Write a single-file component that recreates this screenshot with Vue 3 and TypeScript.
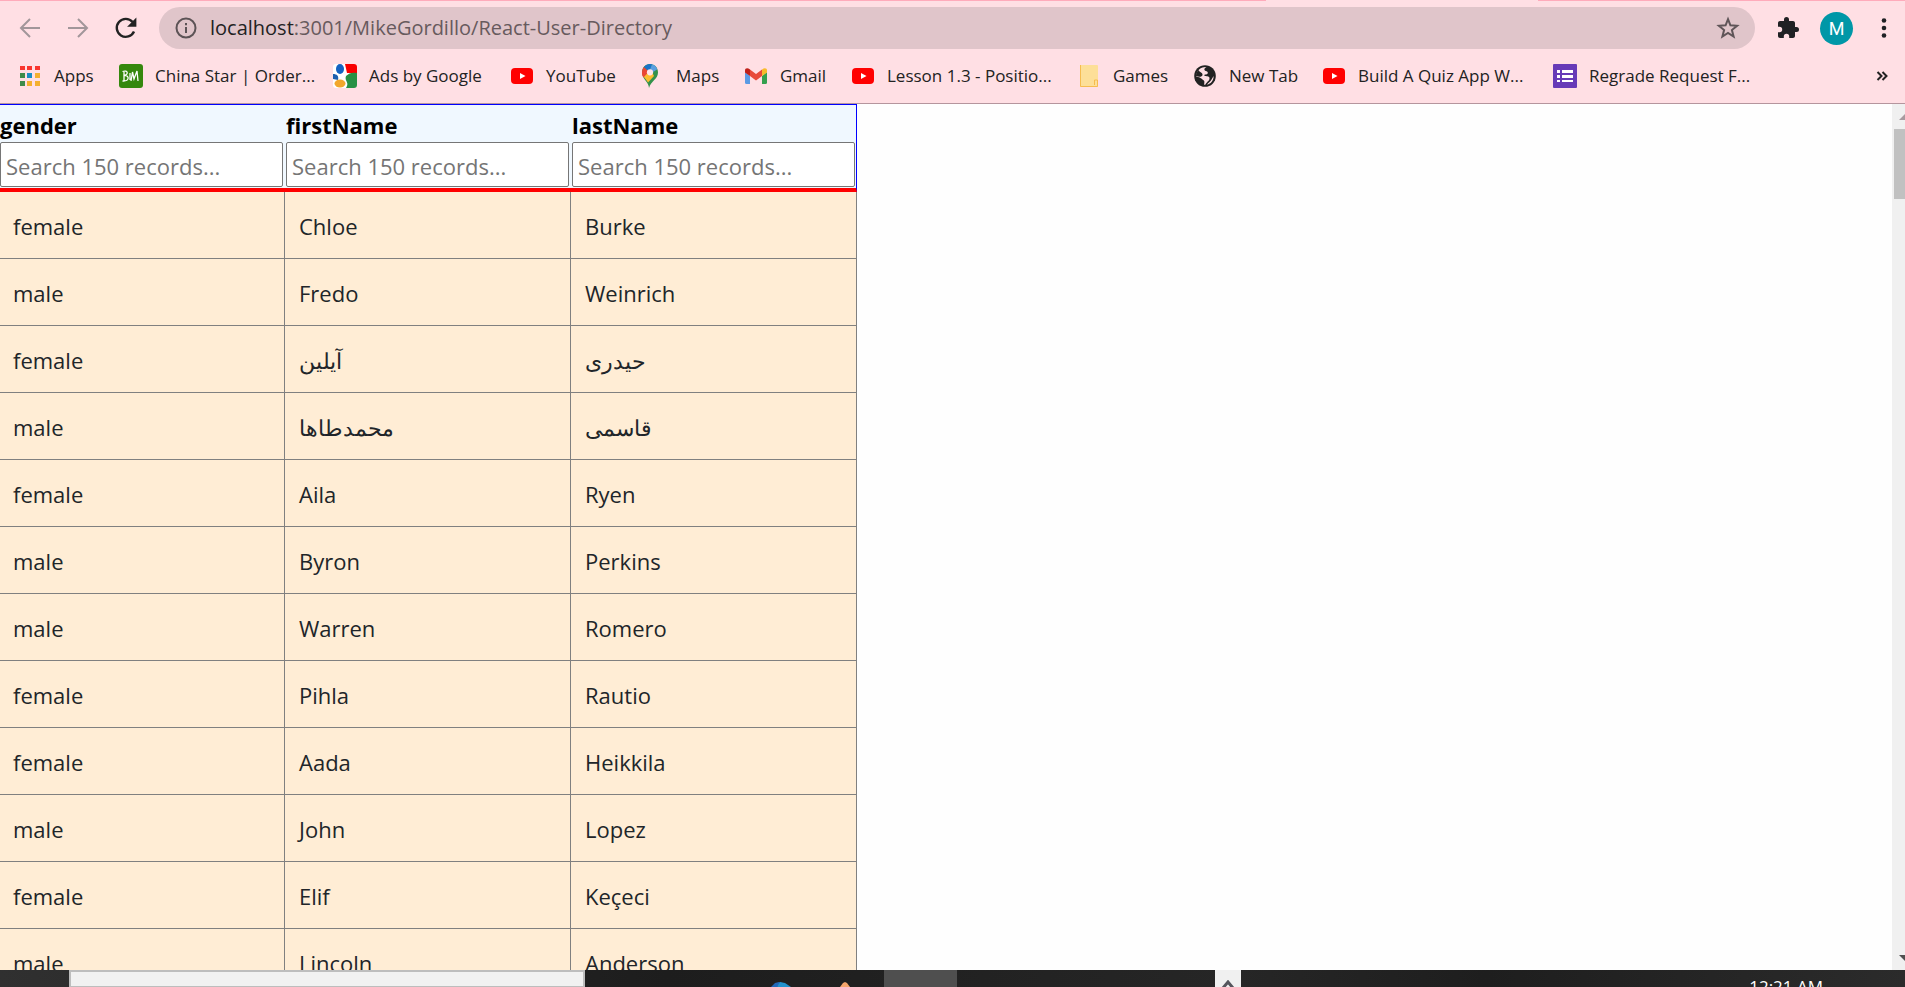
<script setup lang="ts">
import { reactive } from 'vue'

type Field = 'gender' | 'firstName' | 'lastName'
type Person = Record<Field, string>

interface Bookmark {
  icon: string
  label: string
  width: number
}

const fields: Field[] = ['gender', 'firstName', 'lastName']
const filters = reactive<Person>({ gender: '', firstName: '', lastName: '' })

const bookmarks: Bookmark[] = [
  { icon: 'apps', label: 'Apps', width: 41 },
  { icon: 'menu', label: 'China Star | Order...', width: 154 },
  { icon: 'google', label: 'Ads by Google', width: 117 },
  { icon: 'youtube', label: 'YouTube', width: 70 },
  { icon: 'maps', label: 'Maps', width: 44 },
  { icon: 'gmail', label: 'Gmail', width: 47 },
  { icon: 'youtube', label: 'Lesson 1.3 - Positio...', width: 166 },
  { icon: 'folder', label: 'Games', width: 56 },
  { icon: 'globe', label: 'New Tab', width: 69 },
  { icon: 'youtube', label: 'Build A Quiz App W...', width: 171 },
  { icon: 'forms', label: 'Regrade Request F...', width: 162 },
]

const people: Person[] = [
  { gender: 'female', firstName: 'Chloe', lastName: 'Burke' },
  { gender: 'male', firstName: 'Fredo', lastName: 'Weinrich' },
  { gender: 'female', firstName: 'آیلین', lastName: 'حیدری' },
  { gender: 'male', firstName: 'محمدطاها', lastName: 'قاسمی' },
  { gender: 'female', firstName: 'Aila', lastName: 'Ryen' },
  { gender: 'male', firstName: 'Byron', lastName: 'Perkins' },
  { gender: 'male', firstName: 'Warren', lastName: 'Romero' },
  { gender: 'female', firstName: 'Pihla', lastName: 'Rautio' },
  { gender: 'female', firstName: 'Aada', lastName: 'Heikkila' },
  { gender: 'male', firstName: 'John', lastName: 'Lopez' },
  { gender: 'female', firstName: 'Elif', lastName: 'Keçeci' },
  { gender: 'male', firstName: 'Lincoln', lastName: 'Anderson' },
]
</script>

<template>
  <div class="screen">
    <header class="chrome">
      <div class="tab-edge"><span class="edge-left"></span><span class="edge-right"></span></div>
      <div class="toolbar">
        <div class="nav">
          <button class="nav-btn dim" aria-label="Back">
            <svg width="24" height="24" viewBox="0 0 24 24"><path d="M22 12H3M12 3L3 12l9 9" /></svg>
          </button>
          <button class="nav-btn dim" aria-label="Forward">
            <svg width="24" height="24" viewBox="0 0 24 24"><path d="M2 12h19M12 3l9 9-9 9" /></svg>
          </button>
          <button class="nav-btn" aria-label="Reload">
            <svg width="24" height="24" viewBox="0 0 24 24">
              <path d="M20 15.5A9 9 0 1 1 18.6 6" stroke-width="2.4" />
              <path class="solid" d="M22.4 1.5v9.3h-9.3z" />
            </svg>
          </button>
        </div>
        <div class="address">
          <svg class="info" width="22" height="22" viewBox="0 0 22 22">
            <circle cx="11" cy="11" r="9.5" />
            <path d="M11 10v6M11 6v2.2" />
          </svg>
          <span class="url"><span class="host">localhost</span>:3001/MikeGordillo/React-User-Directory</span>
          <button class="star" aria-label="Bookmark this tab">
            <svg width="24" height="24" viewBox="0 0 24 24">
              <path d="M12 3.2l2.4 6.1 6.7.5-5.2 4.2 1.7 6.5L12 16.9l-5.6 3.6L8.1 14 2.9 9.8l6.7-.5z" />
            </svg>
          </button>
        </div>
        <button class="tool puzzle" aria-label="Extensions">
          <svg width="24" height="24" viewBox="0 0 24 24">
            <path d="M20.5 11H19V7c0-1.1-.9-2-2-2h-4V3.500a2.500 2.500 0 0 0-5 0V5H4c-1.100 0-2 .9-2 2v3.800h1.500a2.700 2.700 0 0 1 0 5.400H2V20c0 1.100.9 2 2 2h3.800v-1.500a2.700 2.700 0 0 1 5.400 0V22H17c1.100 0 2-.9 2-2v-4h1.500a2.500 2.500 0 0 0 0-5z" />
          </svg>
        </button>
        <button class="avatar" aria-label="Profile">M</button>
        <button class="tool" aria-label="Menu">
          <svg width="8" height="24" viewBox="0 0 8 24">
            <circle cx="4" cy="4.5" r="2.3" /><circle cx="4" cy="12" r="2.3" /><circle cx="4" cy="19.5" r="2.3" />
          </svg>
        </button>
      </div>

      <nav class="bookmarks">
        <a v-for="b in bookmarks" :key="b.label" class="bookmark" href="#">
          <svg class="bm-icon" width="24" height="24" viewBox="0 0 24 24">
            <g v-if="b.icon === 'apps'">
              <path fill="#f9352e" d="M2 2h5v4H2zM9 2h5v4H9zM17 2h5v4h-5z" />
              <path fill="#3e8b4b" d="M2 9h5v5H2zM2 17h5v5H2z" />
              <path fill="#1a8fc4" d="M9 9h5v5H9z" />
              <path fill="#f4b02f" d="M17 9h5v5h-5zM9 17h5v5H9zM17 17h5v5h-5z" />
            </g>
            <g v-else-if="b.icon === 'menu'">
              <rect width="24" height="24" rx="3" fill="#35880d" />
              <path
                d="M5 7v10M3.500 7.500c6-2 6 3.500 1.500 4 6-.5 5.500 6-1.500 5.500M12 17l1.500-9 1.500 7 3-8 1 10M11 9v7"
                fill="none" stroke="#fff" stroke-width="1.3"
              />
            </g>
            <g v-else-if="b.icon === 'google'">
              <rect width="24" height="24" rx="3" fill="#fff" />
              <path d="M12 0h9a3 3 0 0 1 3 3v6H14z" fill="#f90000" />
              <path d="M24 9v12a3 3 0 0 1-3 3h-8c4-6-2-7 0-12 3-3 6-4 11-3z" fill="#279144" />
              <path d="M0 10c4 0 6 2 5 6l-5-1z" fill="#1d5fae" />
              <ellipse cx="7" cy="5" rx="4" ry="5" fill="#1463c2" />
              <ellipse cx="7" cy="19.5" rx="5.5" ry="4" fill="#f2a72c" />
            </g>
            <g v-else-if="b.icon === 'youtube'">
              <rect x="1" y="4" width="22" height="16" rx="4" fill="#f00" />
              <path d="M10 9l5.5 3-5.5 3z" fill="#fff" />
            </g>
            <g v-else-if="b.icon === 'maps'">
              <path d="M9 24c0-6-7-9-7-15.500C2 4 5 0 10 0s8 4 8 8.500C18 15 11 17 9 24z" fill="#34924b" />
              <path d="M8 18.500C6 15 2.800 12.500 2 9.500L12 8l2 4z" fill="#fbbc2f" />
              <path d="M2 9.500C1.800 7 2.600 4.500 4 3l5 4.500-5.500 6C2.600 12.200 2 10.900 2 9.500z" fill="#ea4535" />
              <path d="M4 3.100C6 .6 9-.5 12 .3L9.500 8z" fill="#1a73c8" />
              <path d="M12 .3c2.600.8 4.300 2.500 5.300 5L10 10 9.500 7z" fill="#5a9ee0" />
              <circle cx="10" cy="8.300" r="3.100" fill="#ffe4e9" />
            </g>
            <g v-else-if="b.icon === 'gmail'">
              <path d="M1 8l5 4v8H2.500A1.500 1.500 0 0 1 1 18.500z" fill="#5b9ae4" />
              <path d="M18 12l5-4v10.500a1.500 1.500 0 0 1-1.500 1.500H18z" fill="#35a04e" />
              <path d="M6 5.500l6 4.500 6-4.500V12l-6 4.500L6 12z" fill="#e84a3a" />
              <path d="M1 6.500C1 4 3.500 3.500 6 5.500V12L1 8.500z" fill="#bf2019" />
              <path d="M18 5.500c2.500-2 5-1.500 5 1v2L18 12z" fill="#f9bb2a" />
            </g>
            <g v-else-if="b.icon === 'folder'">
              <rect x="3" y="1" width="18" height="22" rx="1" fill="#fddf98" />
              <path d="M3.500 1v21.500h17v-6.500h-3v5" fill="none" stroke="#f6bc4f" />
            </g>
            <g v-else-if="b.icon === 'globe'">
              <circle cx="12" cy="12" r="10.8" fill="#222" />
              <path
                d="M13.500 3c-2 .9-2.700 2.400-1.700 3.400s2.800.4 3 2c.2 1.400-1.100 2-2.600 2.100-1.200.1-1.200 1.400 0 1.600 2 .3 4.300.2 4.300 2.300 0 2.500-2.700 3-4 6.100l-1.200.4c-.3-2 .9-3.800-1.100-4.900-2-1-2-2.800-6.800-3.200A9 9 0 0 1 13.500 3z"
                fill="#ffdfe4"
              />
              <path d="M3 12c0-2.500 1-4.500 2.500-6C6.500 8.500 10 8.500 9.500 11c-.3 1.800-3 2.500-6.500 1z" fill="#222" />
              <path d="M20.500 12c.5 4-2.500 8-6.500 8.700 2-2.500 4-3.200 6.500-8.700z" fill="#ffdfe4" />
            </g>
            <g v-else>
              <rect width="24" height="24" rx="1" fill="#673ab7" />
              <path d="M4 6h3v3H4zM4 11h3v3H4zM4 16h3v2H4zM9 6h11v3H9zM9 11h11v3H9zM9 16h11v2H9z" fill="#fff" />
            </g>
          </svg>
          <span class="bm-label" :style="{ width: b.width + 'px' }">{{ b.label }}</span>
        </a>
        <button class="more" aria-label="More bookmarks">
          <svg width="12" height="12" viewBox="0 0 12 12"><path d="M1.500 2l4 4-4 4M6.500 2l4 4-4 4" /></svg>
        </button>
      </nav>
    </header>

    <main class="page">
      <div class="content">
        <table class="directory">
          <thead>
            <tr>
              <th v-for="f in fields" :key="f" scope="col">
                <label :for="'search-' + f">{{ f }}</label>
                <input :id="'search-' + f" v-model="filters[f]" type="text" placeholder="Search 150 records..." />
              </th>
            </tr>
          </thead>
          <tbody>
            <tr v-for="p in people" :key="p.firstName">
              <td v-for="f in fields" :key="f">{{ p[f] }}</td>
            </tr>
          </tbody>
        </table>
      </div>
      <div class="scrollbar">
        <svg width="12" height="6" viewBox="0 0 12 6"><path d="M0 6l6-6 6 6z" fill="#a79a9f" /></svg>
        <div class="thumb"></div>
        <svg class="down" width="12" height="6" viewBox="0 0 12 6"><path d="M0 0h12L6 6z" fill="#505050" /></svg>
      </div>
    </main>

    <footer class="taskbar">
      <div class="task-search"></div>
      <svg class="task-code" width="20" height="17" viewBox="0 0 20 17">
        <path d="M0 17l4-4 4-1 3 1-5 4z" fill="#2067b8" /><path d="M6 17l3-5 5 1 6 4z" fill="#2191cc" />
      </svg>
      <svg class="task-tip" width="12" height="17" viewBox="0 0 12 17"><path d="M1 17l3-4 2-1 2 1 3 4z" fill="#f5a66c" /></svg>
      <div class="task-active"></div>
      <div class="task-caret">
        <svg width="14" height="7" viewBox="0 0 14 7"><path d="M2 8l5-6 5 6" /></svg>
      </div>
      <time class="clock">12:21 AM</time>
    </footer>
  </div>
</template>

<style>
html,
body {
  margin: 0;
  overflow: hidden;
}
</style>

<style scoped>
.screen {
  display: flex;
  flex-direction: column;
  height: 100vh;
  overflow: hidden;
  background: #fefefe;
  font-family: 'Segoe UI', 'Open Sans', 'Noto Sans', sans-serif;
  color: #212529;
}

button {
  padding: 0;
  border: 0;
  background: none;
  font: inherit;
  color: inherit;
}

svg {
  display: block;
}

.chrome {
  flex: none;
  background: #ffdfe4;
  border-bottom: 1px solid #b5959d;
}

.tab-edge {
  display: flex;
  justify-content: space-between;
  height: 1px;
}

.edge-left {
  width: 1266px;
  background: #ffabbb;
}

.edge-right {
  width: 367px;
  background: #ffabbb;
}

.toolbar {
  display: flex;
  align-items: center;
  padding: 6px 17px 0 18px;
}

.nav {
  display: flex;
  gap: 24px;
  margin-right: 21px;
}

.nav-btn svg {
  fill: none;
  stroke: #222;
  stroke-width: 2;
}

.nav-btn .solid {
  fill: #222;
  stroke: none;
}

.nav-btn.dim svg {
  stroke: #a2969a;
}

.address {
  display: flex;
  flex: 1;
  align-items: center;
  gap: 13px;
  height: 42px;
  padding: 0 15px 0 16px;
  border-radius: 21px;
  background: #e0c5ca;
}

.info {
  fill: none;
  stroke: #5c5356;
  stroke-width: 2;
}

.url {
  flex: 1;
  font-size: 20px;
  line-height: 30px;
  color: #675a5d;
  white-space: nowrap;
}

.host {
  color: #222;
}

.star svg {
  fill: none;
  stroke: #5f5558;
  stroke-width: 2;
}

.tool svg {
  fill: #202124;
}

.puzzle {
  margin: 0 20px 0 21px;
}

.avatar {
  width: 33px;
  height: 33px;
  margin-right: 27px;
  border-radius: 50%;
  background: #0097a7;
  color: #fff;
  font-family: Roboto, sans-serif;
  font-size: 18px;
  line-height: 33px;
}

.bookmarks {
  display: flex;
  align-items: center;
  gap: 24px;
  height: 54px;
  padding: 0 17px 0 18px;
}

.bookmark {
  display: flex;
  align-items: center;
  gap: 12px;
  color: #222;
  text-decoration: none;
}

.bm-icon {
  flex: none;
}

.bm-label {
  font-size: 17px;
  line-height: 24px;
  white-space: nowrap;
}

.more {
  margin-left: auto;
}

.more svg {
  fill: none;
  stroke: #222;
  stroke-width: 2;
}

.page {
  display: flex;
  flex: 1;
  min-height: 0;
}

.content {
  flex: 1;
  min-width: 0;
  overflow: hidden;
}

.directory {
  width: 858px;
  max-width: 100%;
  margin-left: -1px;
  border-spacing: 0;
  table-layout: fixed;
}

.directory thead tr {
  background: aliceblue;
}

.directory th {
  box-sizing: border-box;
  height: 88px;
  padding: 6px 2px 0 1px;
  border-top: 1px solid #00f;
  border-bottom: 4px solid #f00;
  text-align: left;
  vertical-align: top;
  color: #000;
}

.directory th:last-child {
  padding-right: 1px;
  border-right: 1px solid #00f;
}

.directory label {
  display: block;
  padding-bottom: 2px;
  font-size: 22px;
  line-height: 29px;
}

.directory input {
  box-sizing: border-box;
  display: block;
  width: 100%;
  height: 45px;
  padding: 3px 5px 0;
  border: 1px solid #767676;
  border-radius: 2px;
  background: #fff;
  font-family: inherit;
  font-size: 22px;
}

.directory input::placeholder {
  color: #757575;
}

.directory td {
  box-sizing: border-box;
  height: 67px;
  padding: 1px 14px 0;
  border-right: 1px solid #808080;
  border-bottom: 1px solid #808080;
  background: #ffedd5;
  font-size: 22px;
  line-height: 36px;
}

.scrollbar {
  display: flex;
  flex-direction: column;
  box-sizing: border-box;
  width: 13px;
  padding: 10px 0 9px;
  overflow: hidden;
  background: #f0f0f0;
}

.scrollbar svg {
  flex: none;
  margin-left: 7px;
}

.thumb {
  height: 70px;
  margin: 9px 0 0 2px;
  background: #c1c1c1;
}

.scrollbar .down {
  margin-top: auto;
}

.taskbar {
  display: flex;
  flex: none;
  height: 17px;
  padding-left: 69px;
  overflow: hidden;
  background: linear-gradient(90deg, #303030, #1d1d1d 35%, #262626 65%, #1e1e1e 78%, #2b2b2b);
}

.task-search {
  box-sizing: border-box;
  width: 516px;
  border: 2px solid #bdbdbd;
  border-bottom-width: 1px;
  background: #f1f1f1;
}

.task-code {
  margin-left: 186px;
}

.task-tip {
  margin-left: 48px;
}

.task-active {
  width: 73px;
  margin-left: 33px;
  background: #4f4f4f;
}

.task-caret {
  display: flex;
  align-items: flex-end;
  justify-content: center;
  width: 26px;
  margin-left: 258px;
  background: #f0f0f0;
}

.task-caret svg {
  fill: none;
  stroke: #55555c;
  stroke-width: 3;
}

.clock {
  margin: 5px 82px 0 auto;
  color: #fff;
  font-size: 17px;
  line-height: 24px;
  white-space: nowrap;
}
</style>
